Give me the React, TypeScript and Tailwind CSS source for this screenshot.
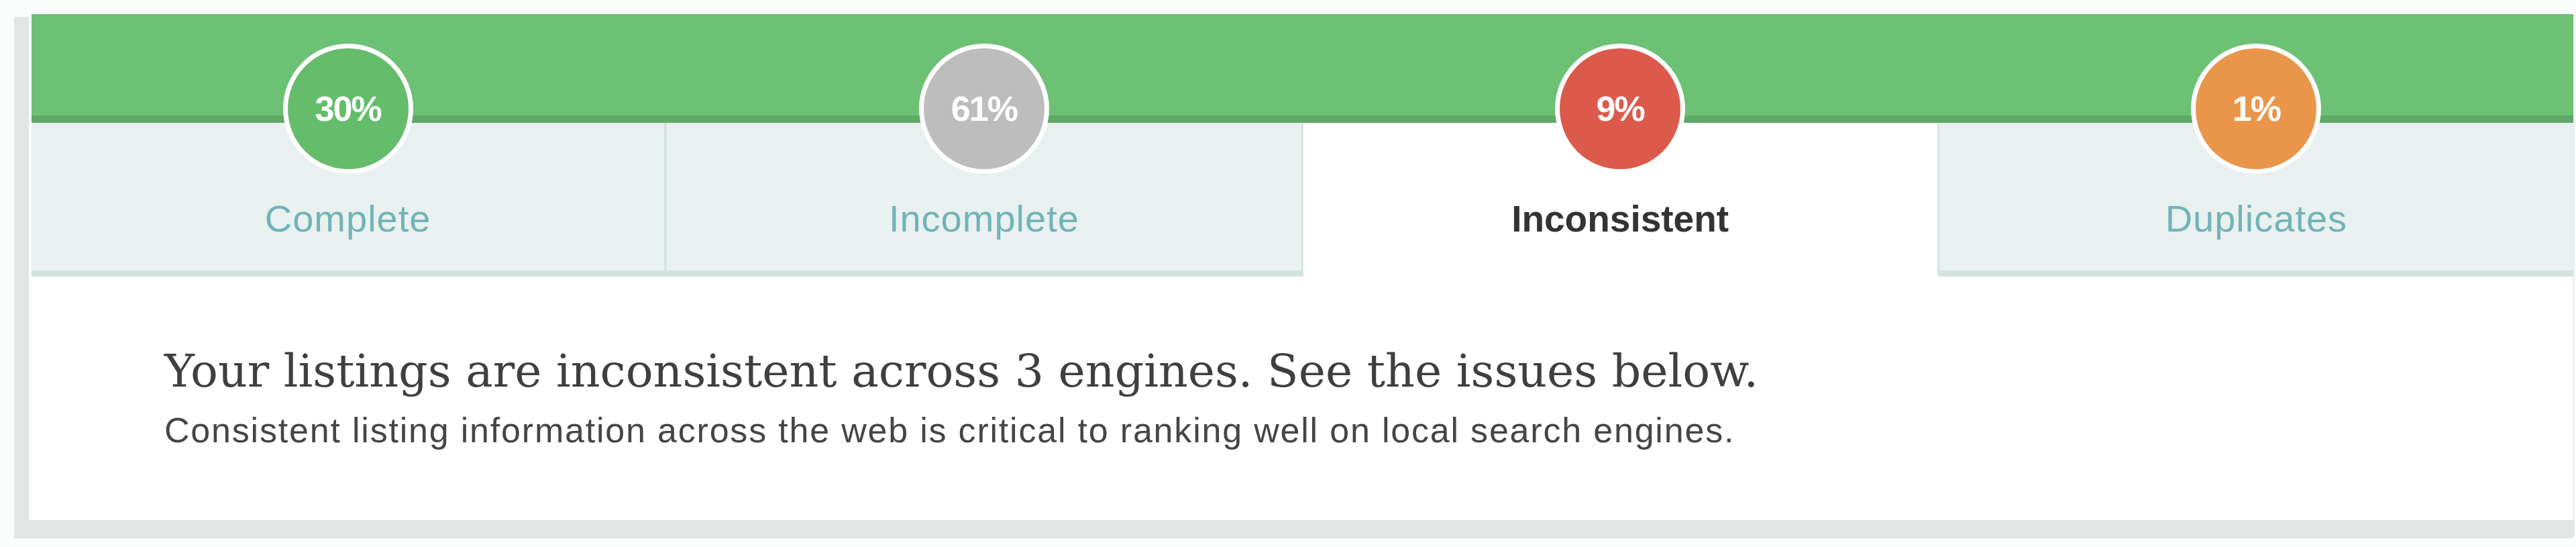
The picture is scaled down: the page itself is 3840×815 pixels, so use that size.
import React from "react";

type Tab = {
  label: string;
  value: string;
  circle: string;
  active?: boolean;
};

const tabs: Tab[] = [
  { label: "Complete", value: "30%", circle: "bg-[#65bd6b]" },
  { label: "Incomplete", value: "61%", circle: "bg-[#bdbdbd]" },
  { label: "Inconsistent", value: "9%", circle: "bg-[#dc5a4b]", active: true },
  { label: "Duplicates", value: "1%", circle: "bg-[#e9964a]" },
];

function TabCell({ tab, index }: { tab: Tab; index: number }) {
  const borders = tab.active
    ? "bg-white border-x border-[#dfe9e8]"
    : index === 0
    ? "bg-[#e8f0f0] border-r-4 border-b-[9px] border-[#d2e3e0]"
    : index === 3
    ? "bg-[#e8f0f0] border-l-2 border-b-[9px] border-[#d2e3e0]"
    : "bg-[#e8f0f0] border-b-[9px] border-r-2 border-[#d2e3e0]";

  return (
    <div className={`h-[229px] flex flex-col items-center ${borders}`}>
      <div
        className={`-mt-[118px] w-[194px] h-[194px] shrink-0 rounded-full border-[7px] border-white flex items-center justify-center ${tab.circle}`}
      >
        <span className="text-white font-bold text-[52px] tracking-[-2px] font-['Liberation_Sans',Arial,sans-serif]">
          {tab.value}
        </span>
      </div>
      <div
        className={`mt-[36px] leading-[62px] font-['Liberation_Sans',Arial,sans-serif] ${
          tab.active
            ? "text-[#333333] font-bold text-[55px]"
            : "text-[#72b3b6] text-[56px] tracking-[1px]"
        }`}
      >
        {tab.label}
      </div>
    </div>
  );
}

export default function App() {
  return (
    <div className="w-[3840px] h-[815px] bg-[#fbfcfc] pt-[21px] pl-[21px] overflow-hidden">
      <div className="w-[3817px] flex flex-col">
        <div className="flex">
          <div className="w-[22px] mt-[4px] bg-[#e3e4e4]" />
          <div className="w-[4px]" />
          <div className="flex-1 flex flex-col bg-white border-r-2 border-[#eceeee]">
            <div className="h-[162px] bg-[#6cc174] border-b-[11px] border-[#5fa865]" />
            <div className="grid grid-cols-4">
              {tabs.map((tab, i) => (
                <TabCell key={tab.label} tab={tab} index={i} />
              ))}
            </div>
            <div className="h-[363px] pl-[198px] pt-[101px]">
              <h2 className="text-[68px] leading-[80px] text-[#3f3f3f] font-['DejaVu_Serif',Georgia,serif]">
                Your listings are inconsistent across 3 engines. See the issues below.
              </h2>
              <p className="mt-[20px] text-[52px] leading-[56px] tracking-[1.8px] text-[#454545] font-['Liberation_Sans',Arial,sans-serif]">
                Consistent listing information across the web is critical to ranking well on local search engines.
              </p>
            </div>
          </div>
        </div>
        <div className="h-[27px] bg-[#e3e4e4] rounded-br-[6px]" />
      </div>
    </div>
  );
}
